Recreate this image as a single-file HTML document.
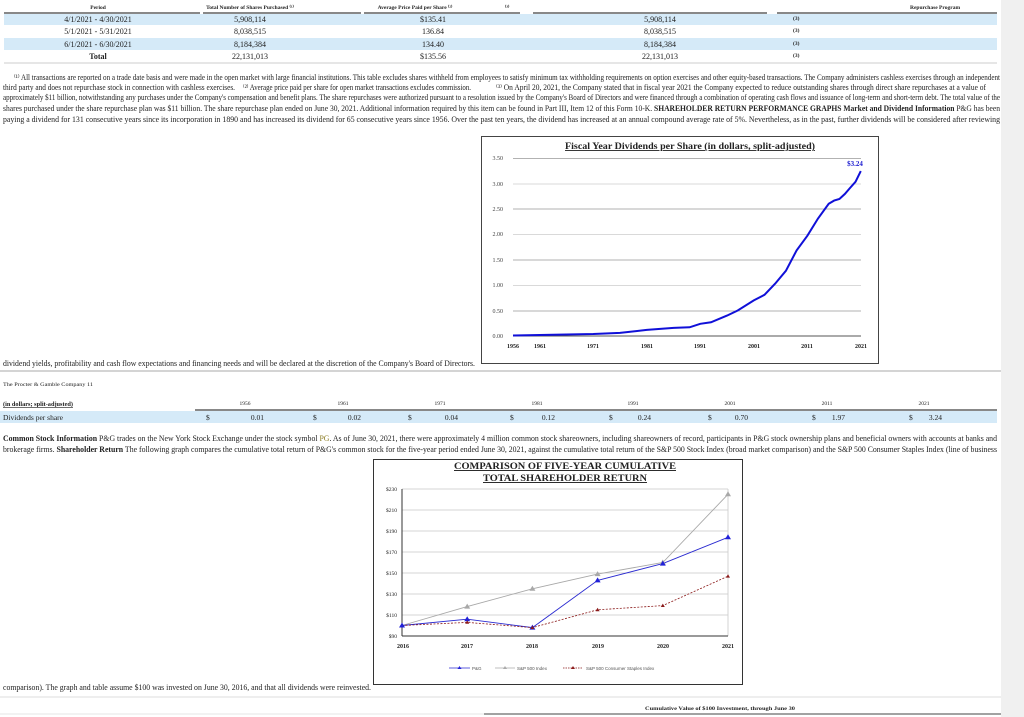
<!DOCTYPE html>
<html><head><meta charset="utf-8"><style>
html,body{margin:0;padding:0;background:#fff;width:1024px;height:717px;overflow:hidden}
svg{display:block}
text{font-family:"Liberation Serif",serif;fill:#222}
.s{font-size:8px}
.h{font-size:5.5px;font-weight:bold}
.a{font-size:6px;fill:#444}
.b{font-weight:bold}
</style></head><body>
<svg width="1024" height="717" viewBox="0 0 1024 717" xmlns="http://www.w3.org/2000/svg">
<rect x="1001" y="0" width="23" height="717" fill="#f0f0f0"/>
<!-- table 1 -->
<text class="h" x="98" y="9" text-anchor="middle">Period</text>
<text class="h" x="250" y="9" text-anchor="middle">Total Number of Shares Purchased ⁽¹⁾</text>
<text class="h" x="415" y="9" text-anchor="middle">Average Price Paid per Share ⁽²⁾</text>
<text class="h" x="505" y="9">⁽³⁾</text>
<text class="h" x="935" y="9" text-anchor="middle">Repurchase Program</text>
<line x1="4" y1="13" x2="200" y2="13" stroke="#111" stroke-width="1"/>
<line x1="203" y1="13" x2="361" y2="13" stroke="#111" stroke-width="1"/>
<line x1="364" y1="13" x2="520" y2="13" stroke="#111" stroke-width="1"/>
<line x1="533" y1="13" x2="767" y2="13" stroke="#111" stroke-width="1"/>
<line x1="777" y1="13" x2="997" y2="13" stroke="#111" stroke-width="1"/>
<rect x="4" y="14" width="993" height="11" fill="#d5eaf8"/>
<rect x="4" y="38" width="993" height="12" fill="#d5eaf8"/>
<line x1="4" y1="63" x2="997" y2="63" stroke="#ccc"/>
<g class="s" font-size="8">
<text class="s" x="98" y="22" text-anchor="middle">4/1/2021 - 4/30/2021</text>
<text class="s" x="98" y="34" text-anchor="middle">5/1/2021 - 5/31/2021</text>
<text class="s" x="98" y="47" text-anchor="middle">6/1/2021 - 6/30/2021</text>
<text class="s b" x="98" y="59" text-anchor="middle">Total</text>
<text class="s" x="250" y="22" text-anchor="middle">5,908,114</text>
<text class="s" x="250" y="34" text-anchor="middle">8,038,515</text>
<text class="s" x="250" y="47" text-anchor="middle">8,184,384</text>
<text class="s" x="250" y="59" text-anchor="middle">22,131,013</text>
<text class="s" x="433" y="22" text-anchor="middle">$135.41</text>
<text class="s" x="433" y="34" text-anchor="middle">136.84</text>
<text class="s" x="433" y="47" text-anchor="middle">134.40</text>
<text class="s" x="433" y="59" text-anchor="middle">$135.56</text>
<text class="s" x="660" y="22" text-anchor="middle">5,908,114</text>
<text class="s" x="660" y="34" text-anchor="middle">8,038,515</text>
<text class="s" x="660" y="47" text-anchor="middle">8,184,384</text>
<text class="s" x="660" y="59" text-anchor="middle">22,131,013</text>
<text class="h" x="793" y="20">(3)</text><text class="h" x="793" y="32">(3)</text><text class="h" x="793" y="45">(3)</text><text class="h" x="793" y="57">(3)</text>
</g>
<!-- paragraph -->
<text class="s" x="14" y="80" textLength="986" lengthAdjust="spacingAndGlyphs">⁽¹⁾ All transactions are reported on a trade date basis and were made in the open market with large financial institutions. This table excludes shares withheld from employees to satisfy minimum tax withholding requirements on option exercises and other equity-based transactions. The Company administers cashless exercises through an independent</text>
<text class="s" x="3" y="90" textLength="232" lengthAdjust="spacingAndGlyphs">third party and does not repurchase stock in connection with cashless exercises.</text>
<text class="s" x="243" y="90" textLength="228" lengthAdjust="spacingAndGlyphs">⁽²⁾ Average price paid per share for open market transactions excludes commission.</text>
<text class="s" x="496" y="90" textLength="490" lengthAdjust="spacingAndGlyphs">⁽³⁾ On April 20, 2021, the Company stated that in fiscal year 2021 the Company expected to reduce outstanding shares through direct share repurchases at a value of</text>
<text class="s" x="3" y="100" textLength="997" lengthAdjust="spacingAndGlyphs">approximately $11 billion, notwithstanding any purchases under the Company's compensation and benefit plans. The share repurchases were authorized pursuant to a resolution issued by the Company's Board of Directors and were financed through a combination of operating cash flows and issuance of long-term and short-term debt. The total value of the</text>
<text class="s" x="3" y="111" textLength="997" lengthAdjust="spacingAndGlyphs">shares purchased under the share repurchase plan was $11 billion. The share repurchase plan ended on June 30, 2021. Additional information required by this item can be found in Part III, Item 12 of this Form 10-K. <tspan class="b">SHAREHOLDER RETURN PERFORMANCE GRAPHS Market and Dividend Information</tspan> P&amp;G has been</text>
<text class="s" x="3" y="122" textLength="997" lengthAdjust="spacingAndGlyphs">paying a dividend for 131 consecutive years since its incorporation in 1890 and has increased its dividend for 65 consecutive years since 1956. Over the past ten years, the dividend has increased at an annual compound average rate of 5%. Nevertheless, as in the past, further dividends will be considered after reviewing</text>
<!-- chart 1 -->
<rect x="481.5" y="136.5" width="397" height="227" fill="#fff" stroke="#444"/>
<text x="690" y="149" text-anchor="middle" font-size="9" font-weight="bold" text-decoration="underline" textLength="250" lengthAdjust="spacingAndGlyphs">Fiscal Year Dividends per Share (in dollars, split-adjusted)</text>
<g stroke="#ccc" stroke-width="0.8">
<line x1="513" y1="158.5" x2="861" y2="158.5" stroke="#999"/><line x1="513" y1="184" x2="861" y2="184"/><line x1="513" y1="209" x2="861" y2="209" stroke="#999"/><line x1="513" y1="234.5" x2="861" y2="234.5"/><line x1="513" y1="260" x2="861" y2="260" stroke="#999"/><line x1="513" y1="285.5" x2="861" y2="285.5"/><line x1="513" y1="311" x2="861" y2="311" stroke="#999"/>
</g>
<line x1="513" y1="336" x2="861" y2="336" stroke="#555"/>
<g class="a" text-anchor="end" font-size="5.5">
<text class="a" x="503" y="160">3.50</text><text class="a" x="503" y="186">3.00</text><text class="a" x="503" y="211">2.50</text><text class="a" x="503" y="236">2.00</text><text class="a" x="503" y="262">1.50</text><text class="a" x="503" y="287">1.00</text><text class="a" x="503" y="313">0.50</text><text class="a" x="503" y="338">0.00</text>
</g>
<g font-size="6" font-weight="bold" text-anchor="middle">
<text x="513" y="348">1956</text><text x="540" y="348">1961</text><text x="593" y="348">1971</text><text x="647" y="348">1981</text><text x="700" y="348">1991</text><text x="754" y="348">2001</text><text x="807" y="348">2011</text><text x="861" y="348">2021</text>
</g>
<text x="855" y="166" font-size="7" font-weight="bold" fill="#1a1ad0" style="fill:#1a1ad0" text-anchor="middle">$3.24</text>
<polyline fill="none" stroke="#1010d8" stroke-width="2" points="513,335.5 539.8,335 566.5,334.5 593.3,334 620,332.9 646.8,329.9 673.6,327.9 689.6,327.3 700.3,323.8 711,322.3 727,315.6 737.7,310.5 753.8,300.4 764.5,294.8 775.2,283.6 785.9,270.8 796.6,250.4 807.4,235.7 818,218.5 828.7,203.8 834.1,200.6 839.4,199 844.8,194 850.1,187.9 855.5,181.8 860.8,171.1"/>
<text class="s" x="3" y="366" textLength="472" lengthAdjust="spacingAndGlyphs">dividend yields, profitability and cash flow expectations and financing needs and will be declared at the discretion of the Company's Board of Directors.</text>
<line x1="0" y1="371" x2="1001" y2="371" stroke="#aaa"/>
<text x="3" y="386" font-size="5.5" textLength="90" lengthAdjust="spacingAndGlyphs">The Procter &amp; Gamble Company 11</text>
<!-- table 2 -->
<text x="3" y="406" font-size="6.5" font-weight="bold" text-decoration="underline" textLength="70" lengthAdjust="spacingAndGlyphs">(in dollars; split-adjusted)</text>
<g font-size="5.5" text-anchor="middle">
<text x="245" y="405">1956</text><text x="343" y="405">1961</text><text x="440" y="405">1971</text><text x="537" y="405">1981</text><text x="633" y="405">1991</text><text x="730" y="405">2001</text><text x="827" y="405">2011</text><text x="924" y="405">2021</text>
</g>
<line x1="195" y1="410" x2="997" y2="410" stroke="#111"/>
<rect x="0" y="411" width="997" height="12" fill="#d5eaf8"/>
<g font-size="7.5">
<text x="3" y="420" font-size="7.5">Dividends per share</text>
<text x="206" y="420">$</text><text x="313" y="420">$</text><text x="408" y="420">$</text><text x="510" y="420">$</text><text x="609" y="420">$</text><text x="708" y="420">$</text><text x="812" y="420">$</text><text x="909" y="420">$</text>
<g text-anchor="end"><text x="264" y="420">0.01</text><text x="361" y="420">0.02</text><text x="458" y="420">0.04</text><text x="555" y="420">0.12</text><text x="651" y="420">0.24</text><text x="748" y="420">0.70</text><text x="845" y="420">1.97</text><text x="942" y="420">3.24</text></g>
</g>
<text class="s" x="3" y="441" textLength="994" lengthAdjust="spacingAndGlyphs"><tspan class="b">Common Stock Information</tspan> P&amp;G trades on the New York Stock Exchange under the stock symbol <tspan style="fill:#8a7a20">PG</tspan>. As of June 30, 2021, there were approximately 4 million common stock shareowners, including shareowners of record, participants in P&amp;G stock ownership plans and beneficial owners with accounts at banks and</text>
<text class="s" x="3" y="452" textLength="994" lengthAdjust="spacingAndGlyphs">brokerage firms. <tspan class="b">Shareholder Return</tspan> The following graph compares the cumulative total return of P&amp;G's common stock for the five-year period ended June 30, 2021, against the cumulative total return of the S&amp;P 500 Stock Index (broad market comparison) and the S&amp;P 500 Consumer Staples Index (line of business</text>
<!-- chart 2 -->
<rect x="373.5" y="459.5" width="369" height="225" fill="#fff" stroke="#333"/>
<text x="565" y="469" text-anchor="middle" font-size="9.5" font-weight="bold" text-decoration="underline" textLength="222" lengthAdjust="spacingAndGlyphs">COMPARISON OF FIVE-YEAR CUMULATIVE</text>
<text x="565" y="481" text-anchor="middle" font-size="9.5" font-weight="bold" text-decoration="underline" textLength="164" lengthAdjust="spacingAndGlyphs">TOTAL SHAREHOLDER RETURN</text>
<g stroke="#c8c8c8" stroke-width="0.8">
<line x1="402" y1="489" x2="728" y2="489"/><line x1="402" y1="510" x2="728" y2="510"/><line x1="402" y1="531" x2="728" y2="531"/><line x1="402" y1="552" x2="728" y2="552"/><line x1="402" y1="573" x2="728" y2="573"/><line x1="402" y1="594" x2="728" y2="594"/><line x1="402" y1="615" x2="728" y2="615"/>
<line x1="728" y1="489" x2="728" y2="636"/>
</g>
<line x1="402" y1="489" x2="402" y2="636" stroke="#333"/>
<line x1="402" y1="636" x2="728" y2="636" stroke="#333"/>
<g font-size="5.5" text-anchor="end">
<text x="397" y="491">$230</text><text x="397" y="512">$210</text><text x="397" y="533">$190</text><text x="397" y="554">$170</text><text x="397" y="575">$150</text><text x="397" y="596">$130</text><text x="397" y="617">$110</text><text x="397" y="638">$90</text>
</g>
<g font-size="6" font-weight="bold" text-anchor="middle">
<text x="403" y="648">2016</text><text x="467" y="648">2017</text><text x="532" y="648">2018</text><text x="598" y="648">2019</text><text x="663" y="648">2020</text><text x="728" y="648">2021</text>
</g>
<polyline fill="none" stroke="#a8a8a8" stroke-width="0.9" points="402,625.5 467.2,606.6 532.4,588.8 597.6,574.1 662.8,562.5 728,494.3"/>
<polyline fill="none" stroke="#2a2ad0" stroke-width="0.9" points="402,625.5 467.2,619.2 532.4,627.6 597.6,580.4 662.8,563.6 728,537.3"/>
<polyline fill="none" stroke="#8b1a1a" stroke-width="0.8" stroke-dasharray="2,1.5" points="402,625.5 467.2,622.4 532.4,627.6 597.6,609.8 662.8,605.6 728,576.2"/>
<g fill="#a8a8a8"><path d="M467.2,603.6l3,5h-6z"/><path d="M532.4,585.8l3,5h-6z"/><path d="M597.6,571.1l3,5h-6z"/><path d="M662.8,559.5l3,5h-6z"/><path d="M728,491.3l3,5h-6z"/></g>
<g fill="#2020d8"><path d="M402,622.5l3,5h-6z"/><path d="M467.2,616.2l3,5h-6z"/><path d="M532.4,624.6l3,5h-6z"/><path d="M597.6,577.4l3,5h-6z"/><path d="M662.8,560.6l3,5h-6z"/><path d="M728,534.3l3,5h-6z"/></g>
<g fill="#8b1a1a"><path d="M467.2,620.4l2,3.4h-4z"/><path d="M532.4,625.6l2,3.4h-4z"/><path d="M597.6,607.8l2,3.4h-4z"/><path d="M662.8,603.6l2,3.4h-4z"/><path d="M728,574.2l2,3.4h-4z"/></g>
<g font-family="Liberation Sans" font-size="4.5">
<line x1="449" y1="668" x2="470" y2="668" stroke="#2a2ad0" stroke-width="0.8"/><path d="M459.5,666l2,3h-4z" fill="#2020d8"/>
<text x="472" y="670" style="font-family:'Liberation Sans',sans-serif;fill:#555">P&amp;G</text>
<line x1="495" y1="668" x2="515" y2="668" stroke="#aaa" stroke-width="0.8"/><path d="M505,666l2,3h-4z" fill="#aaa"/>
<text x="517" y="670" style="font-family:'Liberation Sans',sans-serif;fill:#555">S&amp;P 500 Index</text>
<line x1="563" y1="668" x2="583" y2="668" stroke="#8b1a1a" stroke-width="0.8" stroke-dasharray="1.5,1"/><path d="M573,666l2,3h-4z" fill="#8b1a1a"/>
<text x="586" y="670" style="font-family:'Liberation Sans',sans-serif;fill:#555">S&amp;P 500 Consumer Staples Index</text>
</g>
<text class="s" x="3" y="690" textLength="368" lengthAdjust="spacingAndGlyphs">comparison). The graph and table assume $100 was invested on June 30, 2016, and that all dividends were reinvested.</text>
<line x1="0" y1="697" x2="1001" y2="697" stroke="#ddd"/>
<text x="720" y="710" text-anchor="middle" font-size="5.5" font-weight="bold" textLength="150" lengthAdjust="spacingAndGlyphs">Cumulative Value of $100 Investment, through June 30</text>
<line x1="484" y1="714" x2="1001" y2="714" stroke="#444"/>
<line x1="0" y1="714" x2="484" y2="714" stroke="#e6e6e6"/>
</svg>
</body></html>
